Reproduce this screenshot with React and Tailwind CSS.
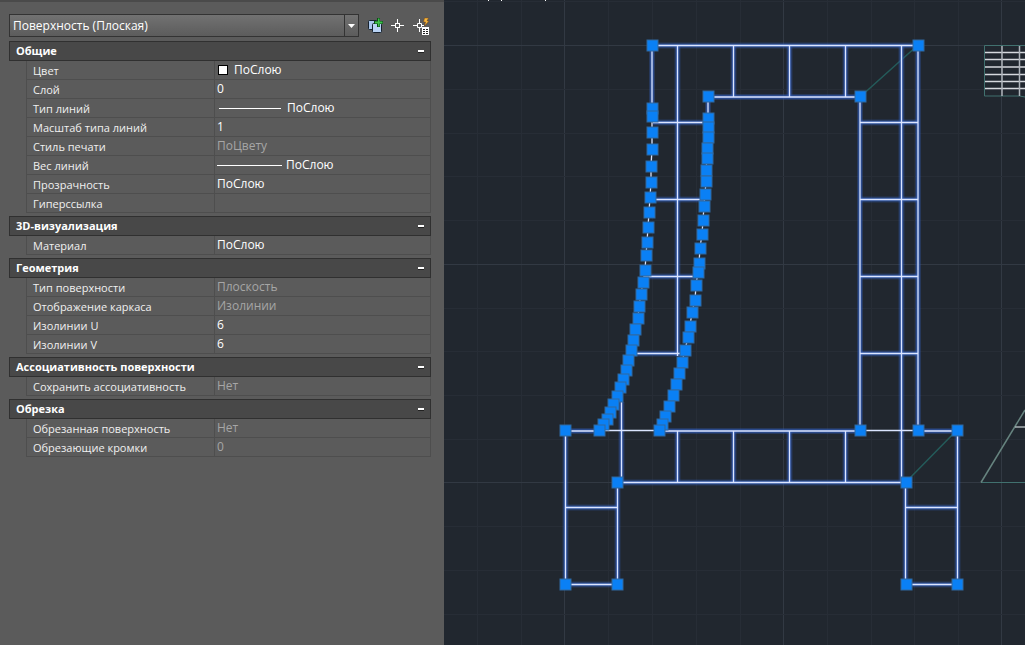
import React, { useState } from 'react';

const SECTIONS = [
  {
    title: 'Общие',
    rows: [
      { label: 'Цвет', value: 'ПоСлою', kind: 'color' },
      { label: 'Слой', value: '0' },
      { label: 'Тип линий', value: 'ПоСлою', kind: 'linetype' },
      { label: 'Масштаб типа линий', value: '1' },
      { label: 'Стиль печати', value: 'ПоЦвету', readOnly: true },
      { label: 'Вес линий', value: 'ПоСлою', kind: 'lineweight' },
      { label: 'Прозрачность', value: 'ПоСлою' },
      { label: 'Гиперссылка', value: '' },
    ],
  },
  {
    title: '3D-визуализация',
    rows: [{ label: 'Материал', value: 'ПоСлою' }],
  },
  {
    title: 'Геометрия',
    rows: [
      { label: 'Тип поверхности', value: 'Плоскость', readOnly: true },
      { label: 'Отображение каркаса', value: 'Изолинии', readOnly: true },
      { label: 'Изолинии U', value: '6' },
      { label: 'Изолинии V', value: '6' },
    ],
  },
  {
    title: 'Ассоциативность поверхности',
    rows: [{ label: 'Сохранить ассоциативность', value: 'Нет', readOnly: true }],
  },
  {
    title: 'Обрезка',
    rows: [
      { label: 'Обрезанная поверхность', value: 'Нет', readOnly: true },
      { label: 'Обрезающие кромки', value: '0', readOnly: true },
    ],
  },
];

// grips along the two curved edges of the back
const LEFT_CURVE = [
  [652, 108], [652, 116], [652, 132], [652, 149], [651, 166], [651, 182], [650, 197], [649, 212],
  [648, 227], [647, 242], [646, 255], [645, 270], [643, 282], [641, 294], [639, 306], [638, 318],
  [635, 329], [633, 340], [631, 350], [628, 360], [626, 370], [623, 379], [620, 387], [617, 396],
  [613, 404], [610, 412], [607, 419], [603, 424], [599, 430],
];

const RIGHT_CURVE = [
  [708, 118], [708, 127], [708, 137], [707, 148], [707, 158], [706, 170], [706, 181], [705, 194],
  [704, 206], [703, 220], [702, 234], [700, 248], [699, 263], [698, 272], [696, 285], [695, 300],
  [692, 312], [690, 326], [688, 337], [685, 350], [682, 362], [679, 373], [676, 384], [673, 395],
  [669, 406], [665, 416], [662, 424], [659, 430],
];

const CORNERS = [
  [652, 45], [918, 45], [708, 96], [860, 96], [565, 430], [860, 430], [918, 430], [957, 430],
  [617, 482], [906, 482], [565, 584], [617, 584], [906, 584], [957, 584],
];

// x1, y1, x2, y2
const ISOLINES = [
  [652, 45.5, 918, 45.5], [708, 97, 860, 97],
  [653, 122.5, 708, 122.5], [650, 199.5, 705, 199.5], [644, 276.5, 697, 276.5], [632, 353.5, 684, 353.5],
  [860, 122.5, 918, 122.5], [860, 199.5, 918, 199.5], [860, 276.5, 918, 276.5], [860, 353.5, 918, 353.5],
  [565, 431, 599, 431], [660, 431, 860, 431], [918, 431, 957, 431],
  [617, 482.5, 906, 482.5],
  [565, 507.5, 617, 507.5], [906, 507.5, 957, 507.5],
  [565, 584.5, 617, 584.5], [906, 584.5, 957, 584.5],
  [652, 45, 652, 108], [708, 96, 708, 118],
  [677.5, 45, 677.5, 356], [733.5, 45, 733.5, 97], [789.5, 45, 789.5, 97], [845.5, 45, 845.5, 97],
  [677.5, 431, 677.5, 482], [733.5, 431, 733.5, 482], [789.5, 431, 789.5, 482], [845.5, 431, 845.5, 482],
  [860, 97, 860, 430], [901.5, 45, 901.5, 482], [918, 45, 918, 430],
  [565.5, 430, 565.5, 584], [617.5, 482, 617.5, 584], [621.5, 402, 621.5, 482],
  [905.5, 482, 905.5, 584], [957.5, 430, 957.5, 584],
];

const GRID_X = [477, 521, 564, 608, 652, 696, 740, 783, 827, 871, 914, 958, 1001];
const GRID_Y = [1, 45, 89, 133, 176, 220, 264, 308, 351, 395, 439, 482, 526, 570, 614];
const MAJOR = [45, 264, 482, 564, 783, 1001];

const toPoints = (points) => points.map((p) => p.join(',')).join(' ');

function PropertyValue({ row }) {
  if (row.kind === 'color') {
    return (
      <span className="flex items-center gap-1.5">
        <span className="ml-px h-2.5 w-2.5 border border-black bg-white" />
        {row.value}
      </span>
    );
  }
  if (row.kind === 'linetype') {
    return (
      <span className="flex items-center gap-1.5">
        <span className="ml-0.5 h-px w-[62px] bg-white" />
        {row.value}
      </span>
    );
  }
  if (row.kind === 'lineweight') {
    return (
      <span className="flex items-center gap-1">
        <span className="h-px w-[65px] bg-white" />
        {row.value}
      </span>
    );
  }
  return row.value;
}

function PropertySection({ section }) {
  const [open, setOpen] = useState(true);

  return (
    <section>
      <button
        type="button"
        onClick={() => setOpen(!open)}
        aria-expanded={open}
        className="flex h-5 w-full items-center justify-between border border-[#303030] bg-[#484848] px-1.5 text-left text-[11px] font-bold text-white"
      >
        {section.title}
        <span className="h-0.5 w-1.5 bg-white shadow-[0_1px_0_#222]" />
      </button>
      {open && (
        <div className="pl-[17px]">
          <table className="w-full table-fixed border-separate border-spacing-0 border-x border-[#4e4e4e]">
            <tbody>
              {section.rows.map((row) => (
                <tr key={row.label}>
                  <th
                    scope="row"
                    className="h-[19px] w-[188px] whitespace-nowrap border-b border-r border-[#4e4e4e] p-0 pl-1.5 pt-0.5 text-left text-[11px] font-normal leading-4 text-[#f0f0f0]"
                  >
                    {row.label}
                  </th>
                  <td
                    className={`h-[19px] whitespace-nowrap border-b border-[#4e4e4e] p-0 pl-0.5 leading-[18px] ${
                      row.readOnly ? 'text-[#a6a6a6]' : 'text-white'
                    }`}
                  >
                    <PropertyValue row={row} />
                  </td>
                </tr>
              ))}
            </tbody>
          </table>
        </div>
      )}
    </section>
  );
}

function PickAddIcon() {
  return (
    <svg width="16" height="18" viewBox="0 0 16 18" aria-hidden="true">
      <rect x="1.5" y="3.5" width="9" height="9" rx="1" fill="#a9c6ec" stroke="#17222f" />
      <rect x="5.5" y="6.500" width="9" height="9" rx="1" fill="#b9d3f5" stroke="#17222f" />
      <path d="M10 1h3v3h3v3h-3v3h-3V7H7V4h3z" fill="#0d4a18" />
      <path d="M11 1.500h1.500v3H15.500V6.500H12.500v3H11V6.500H8V4.500h3z" fill="#3fc24b" />
    </svg>
  );
}

function SelectObjectsIcon() {
  return (
    <svg width="14" height="14" viewBox="0 0 14 14" fill="none" stroke="#fff" aria-hidden="true">
      <path d="M0 6.500h4M9 6.500h4M6.500 0v4M6.500 9v4" />
      <rect x="4.500" y="4.500" width="4" height="4" />
    </svg>
  );
}

function QuickSelectIcon() {
  return (
    <svg width="17" height="18" viewBox="0 0 17 18" fill="none" aria-hidden="true">
      <path d="M0 8.500h4M6.500 2v4M9 8.500h2M6.500 11v4M4.500 6.500h4v4h-4z" stroke="#fff" />
      <path d="M11.500 1h4l-1.500 3h2l-4.500 5 1-4h-2z" fill="#f6b63c" stroke="#7b4710" strokeWidth="0.500" />
      <path d="M9 10h7v8H9z" fill="#fff" />
      <path d="M10 12h2v1h-2zM13 12h2v1h-2zM10 14h2v1h-2zM13 14h2v1h-2zM10 16h2v1h-2zM13 16h2v1h-2z" fill="#222" />
    </svg>
  );
}

function PropertiesPanel() {
  return (
    <aside className="w-[444px] shrink-0 border-t-2 border-[#4a4a4a] bg-[#5b5b5b] pl-[9px] pr-[13px] pt-3">
      <div className="mb-1 flex items-center">
        <div className="relative w-[350px] shrink-0">
          <select
            aria-label="Тип объекта"
            className="block h-[23px] w-full appearance-none border border-[#333] bg-linear-to-b from-[#727272] to-[#5c5c5c] pl-[3px] text-white outline-none"
          >
            <option>Поверхность (Плоская)</option>
          </select>
          <span className="pointer-events-none absolute inset-y-0 right-0 flex w-[15px] items-center justify-center border border-[#333]">
            <svg width="7" height="4" viewBox="0 0 7 4" aria-hidden="true">
              <path d="M0 0h7L3.500 4z" fill="#fff" />
            </svg>
          </span>
        </div>
        <div className="ml-2 flex shrink-0 items-center gap-2">
          <button type="button" aria-label="Добавление к набору">
            <PickAddIcon />
          </button>
          <button type="button" aria-label="Выбор объектов">
            <SelectObjectsIcon />
          </button>
          <button type="button" aria-label="Быстрый выбор">
            <QuickSelectIcon />
          </button>
        </div>
      </div>
      <div className="flex flex-col gap-[3px]">
        {SECTIONS.map((section) => (
          <PropertySection key={section.title} section={section} />
        ))}
      </div>
    </aside>
  );
}

function Grip({ x, y }) {
  return (
    <rect x={x - 5} y={y - 5} width="11" height="11" fill="#0a80f5" stroke="#31699f" strokeWidth="1" />
  );
}

function DrawingArea() {
  return (
    <main className="h-screen min-w-0 flex-1 bg-[#21272f]">
      <svg
        className="block h-full w-full"
        viewBox="444 0 581 645"
        preserveAspectRatio="xMinYMin slice"
        role="img"
        aria-label="Чертёж"
      >
        <g strokeWidth="1">
          {GRID_X.map((x) => (
            <path key={x} d={`M${x + 0.5} 0V645`} stroke={MAJOR.includes(x) ? '#323943' : '#272d36'} />
          ))}
          {GRID_Y.map((y) => (
            <path key={y} d={`M444 ${y + 0.5}H1025`} stroke={MAJOR.includes(y) ? '#323943' : '#272d36'} />
          ))}
        </g>

        <path d="M488 0h1v1h-1zM501 0h1v1h-1zM545 0h1v1h-1z" fill="#fff" />

        <g fill="none" stroke="#245b5a" strokeWidth="1.500">
          <path d="M918 45L860 97M957 430L906 482" />
          <path d="M1025 45.500H984.500V96h35l5.500 1M981 482.500H1025" stroke="#41716f" strokeWidth="1" />
          <path d="M981 482.500L1025 410" stroke="#66837f" />
        </g>
        <path
          d="M985 52.500h40M985 59.500h40M985 67h40M985 74.500h40M985 81.500h40M985 88.500h40"
          stroke="#d5d8dd"
          strokeWidth="1.300"
        />
        <path d="M1002 46v50M1019.500 46v50" stroke="#b0b5bc" strokeWidth="1.500" />
        <path d="M1015 427h10" stroke="#a9b2b4" strokeWidth="1.500" />

        <g fill="none" stroke="#3059b0">
          {ISOLINES.map(([x1, y1, x2, y2], i) => (
            <g key={i}>
              <line x1={x1} y1={y1} x2={x2} y2={y2} strokeWidth="6" opacity="0.35" />
              <line x1={x1} y1={y1} x2={x2} y2={y2} strokeWidth="3.500" opacity="0.75" />
            </g>
          ))}
        </g>
        <g fill="none" stroke="#dbe5ff" strokeWidth="1.300">
          {ISOLINES.map(([x1, y1, x2, y2], i) => (
            <line key={i} x1={x1} y1={y1} x2={x2} y2={y2} />
          ))}
          <path d="M599 430.500H660M860 430.500H918" />
          <polyline points={toPoints(LEFT_CURVE)} />
          <polyline points={toPoints(RIGHT_CURVE)} />
        </g>

        {[...CORNERS, ...LEFT_CURVE, ...RIGHT_CURVE].map(([x, y], i) => (
          <Grip key={i} x={x} y={y} />
        ))}
      </svg>
    </main>
  );
}

function App() {
  return (
    <div className="flex min-h-screen overflow-hidden bg-[#5b5b5b] font-['Open_Sans','Noto_Sans',sans-serif] text-[12px] leading-4">
      <PropertiesPanel />
      <DrawingArea />
    </div>
  );
}

export default App;
